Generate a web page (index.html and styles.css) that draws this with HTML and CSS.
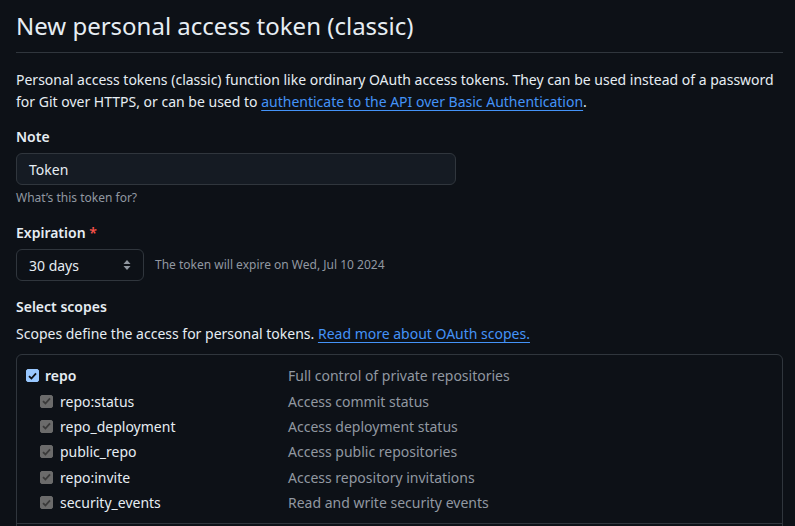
FILE: index.html
```html
<!DOCTYPE html>
<html lang="en">
<head>
<meta charset="utf-8">
<title>New personal access token (classic)</title>
<link rel="stylesheet" href="styles.css">
</head>
<body>
<main class="page">
  <div class="subhead">
    <h1 class="subhead-title">New personal access token (classic)</h1>
  </div>
  <p class="intro">Personal access tokens (classic) function like ordinary OAuth access tokens. They can be used instead of a password for Git over HTTPS, or can be used to <a href="#" class="link">authenticate to the API over Basic Authentication</a>.</p>

  <div class="field field-note">
    <label class="field-label">Note</label>
    <div class="input">Token</div>
    <p class="hint">What’s this token for?</p>
  </div>

  <div class="field">
    <label class="field-label">Expiration <span class="req">*</span></label>
    <div class="expire-row">
      <div class="select">
        <span>30 days</span>
        <svg class="select-arrows" width="8" height="12" viewBox="0 0 8 12"><path d="M4 1 L7.5 5 H0.5 Z M4 11 L7.5 7 H0.5 Z" fill="#9198a1"/></svg>
      </div>
      <span class="expire-note">The token will expire on Wed, Jul 10 2024</span>
    </div>
  </div>

  <div class="field">
    <label class="field-label">Select scopes</label>
    <p class="scopes-desc">Scopes define the access for personal tokens. <a href="#" class="link">Read more about OAuth scopes.</a></p>
    <div class="scopes">
      <div class="scope-group">
        <div class="scope-row">
          <span class="scope-name top"><span class="cb cb-on"><svg width="9" height="8" viewBox="0 0 9 8"><path d="M1 4.2 L3.4 6.5 L8 1.3" stroke="#0d1117" stroke-width="1.8" fill="none"/></svg></span>repo</span>
          <span class="scope-desc">Full control of private repositories</span>
        </div>
        <div class="scope-row">
          <span class="scope-name sub"><span class="cb cb-dis"><svg width="9" height="8" viewBox="0 0 9 8"><path d="M1 4.2 L3.4 6.5 L8 1.3" stroke="#3a3a3a" stroke-width="1.8" fill="none"/></svg></span>repo:status</span>
          <span class="scope-desc">Access commit status</span>
        </div>
        <div class="scope-row">
          <span class="scope-name sub"><span class="cb cb-dis"><svg width="9" height="8" viewBox="0 0 9 8"><path d="M1 4.2 L3.4 6.5 L8 1.3" stroke="#3a3a3a" stroke-width="1.8" fill="none"/></svg></span>repo_deployment</span>
          <span class="scope-desc">Access deployment status</span>
        </div>
        <div class="scope-row">
          <span class="scope-name sub"><span class="cb cb-dis"><svg width="9" height="8" viewBox="0 0 9 8"><path d="M1 4.2 L3.4 6.5 L8 1.3" stroke="#3a3a3a" stroke-width="1.8" fill="none"/></svg></span>public_repo</span>
          <span class="scope-desc">Access public repositories</span>
        </div>
        <div class="scope-row">
          <span class="scope-name sub"><span class="cb cb-dis"><svg width="9" height="8" viewBox="0 0 9 8"><path d="M1 4.2 L3.4 6.5 L8 1.3" stroke="#3a3a3a" stroke-width="1.8" fill="none"/></svg></span>repo:invite</span>
          <span class="scope-desc">Access repository invitations</span>
        </div>
        <div class="scope-row">
          <span class="scope-name sub"><span class="cb cb-dis"><svg width="9" height="8" viewBox="0 0 9 8"><path d="M1 4.2 L3.4 6.5 L8 1.3" stroke="#3a3a3a" stroke-width="1.8" fill="none"/></svg></span>security_events</span>
          <span class="scope-desc">Read and write security events</span>
        </div>
      </div>
      <div class="scope-group">
        <div class="scope-row">
          <span class="scope-name top"><span class="cb"></span>workflow</span>
          <span class="scope-desc">Update GitHub Action workflows</span>
        </div>
      </div>
    </div>
  </div>
</main>
</body>
</html>
```
FILE: styles.css
```css
html, body {
  margin: 0;
  padding: 0;
  background: #0d1117;
  overflow: hidden;
}
body {
  color: #e6edf3;
  font-family: "Noto Sans", "Liberation Sans", sans-serif;
  font-size: 14px;
  line-height: 1.5;
}
.page {
  padding: 0 12px 0 16px;
}
.subhead {
  padding-top: 8px;
  padding-bottom: 9px;
  border-bottom: 1px solid #30363d;
}
.subhead-title {
  margin: 0;
  font-size: 24px;
  font-weight: 400;
  line-height: 35px;
}
.intro {
  margin: 16px 0 0;
  line-height: 22px;
}
.link {
  color: #4493f8;
  text-decoration: underline;
  text-underline-offset: 3px;
}
.field {
  margin-top: 15px;
}
.field-note {
  margin-top: 13px;
}
.field-label {
  display: block;
  font-weight: 600;
  line-height: 21px;
  margin-bottom: 6px;
}
.req {
  color: #f85149;
}
.input {
  height: 30px;
  border: 1px solid #30363d;
  border-radius: 6px;
  background: #151b23;
  padding: 0 12px;
  box-sizing: content-box;
  width: 414px;
  display: flex;
  align-items: center;
  font-size: 14px;
}
.hint {
  margin: 4px 0 0;
  font-size: 12px;
  line-height: 18px;
  color: #9198a1;
}
.expire-row {
  display: flex;
  align-items: center;
  gap: 11px;
}
.select {
  width: 102px;
  height: 30px;
  padding: 0 12px;
  border: 1px solid #30363d;
  border-radius: 6px;
  background: #0d1117;
  display: flex;
  align-items: center;
  justify-content: space-between;
}
.expire-note {
  font-size: 12px;
  color: #9198a1;
}
.scopes-desc {
  margin: 0;
  line-height: 21px;
  margin-top: 3px;
}
.scopes {
  margin-top: 10px;
  border: 1px solid #30363d;
  border-radius: 6px;
}
.scope-group {
  padding: 8px 0 8px 9px;
  border-bottom: 1px solid #30363d;
}
.scope-row {
  display: grid;
  grid-template-columns: 262px 1fr;
  height: 25.4px;
  align-items: center;
}
.scope-name {
  display: flex;
  align-items: center;
  gap: 7px;
}
.scope-name.top {
  font-weight: 600;
  gap: 6px;
}
.scope-name.sub {
  padding-left: 14px;
  gap: 7px;
}
.scope-desc {
  color: #9198a1;
}
.cb {
  width: 13px;
  height: 13px;
  border-radius: 2px;
  display: inline-flex;
  align-items: center;
  justify-content: center;
  box-sizing: border-box;
  border: 1px solid #6e7681;
}
.cb-on {
  background: #99c8ff;
  border-color: #99c8ff;
}
.cb-dis {
  background: #6b6b6b;
  border-color: #6b6b6b;
}
```
